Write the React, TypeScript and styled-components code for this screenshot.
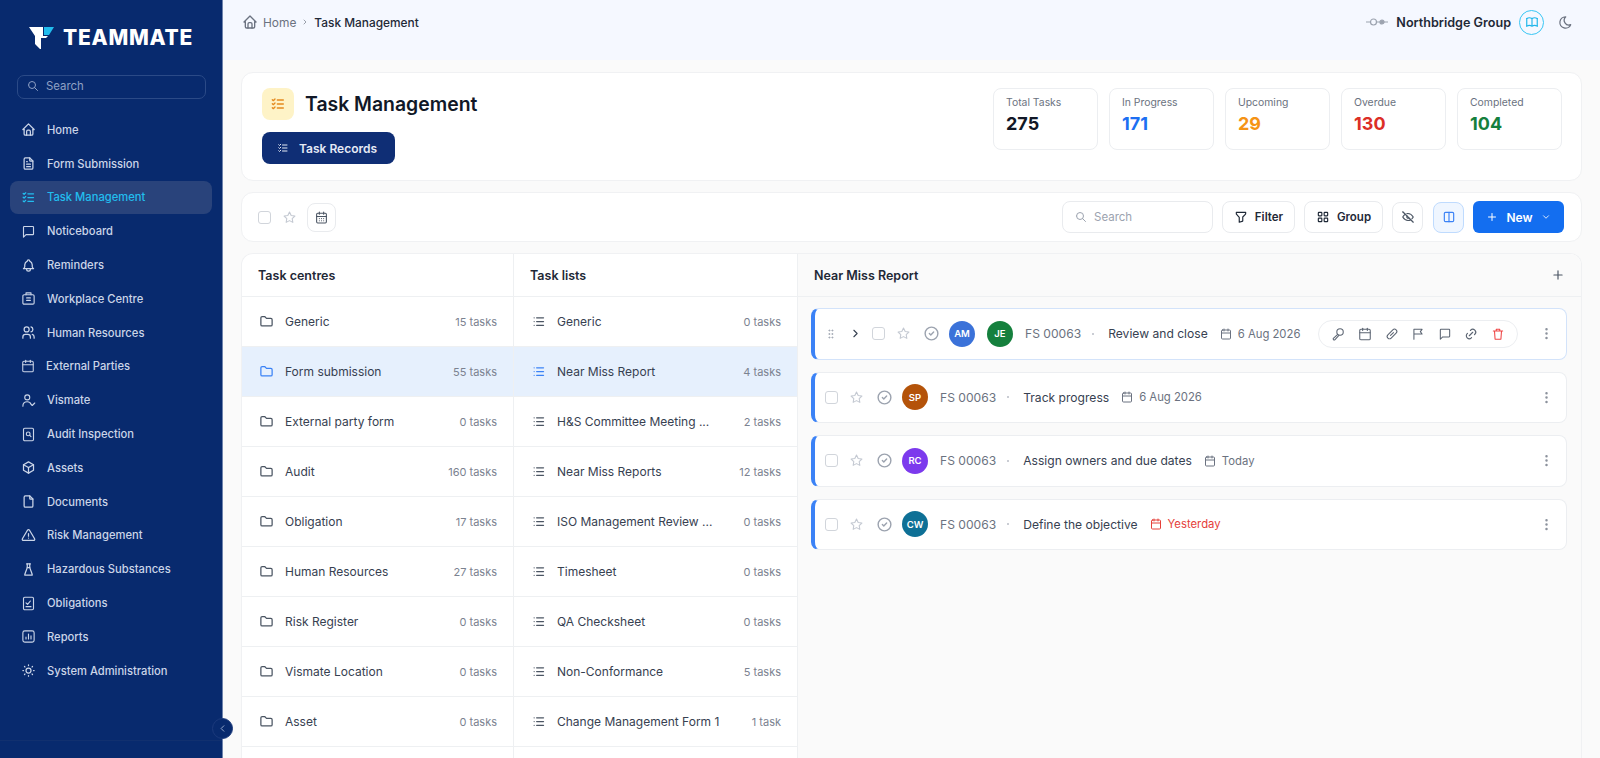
import styled, {createGlobalStyle} from "styled-components";
import {ReactNode} from "react";
import {
    TbHome, TbFileText, TbListCheck, TbBell, TbUsers,
    TbBox, TbFile, TbAlertTriangle, TbFlask, TbSun, TbSearch, TbChevronLeft, TbChevronRight,
    TbChevronDown, TbMoon, TbBook, TbFilter, TbLayoutGrid, TbEyeOff, TbLayoutColumns, TbPlus,
    TbFolder, TbList, TbStar, TbCircleCheck, TbGripVertical, TbDotsVertical, TbLink,
} from "react-icons/tb";
import {Calendar, CalendarDays} from "lucide-react";

const GlobalStyle = createGlobalStyle`
  * {
    box-sizing: border-box;
  }

  html, body {
    margin: 0;
    height: 100%;
    overflow: hidden;
    background: #fafafa;
    font-family: Inter, "Noto Sans", sans-serif;
    color: #1f2937;
  }
`;

const Shell = styled.div`
  display: flex;
  height: 758px;
  overflow: hidden;
`;

const Sidebar = styled.aside`
  position: relative;
  flex: 0 0 223px;
  display: flex;
  flex-direction: column;
  background: #082a6e;
  border-right: 1px solid #6f84ad;
`;

const Brand = styled.div`
  display: flex;
  align-items: center;
  gap: 9px;
  height: 75px;
  padding: 0 0 0 29px;
`;

const BrandName = styled.span`
  color: #fff;
  font-size: 21px;
  font-weight: 800;
  letter-spacing: 0.75px;
`;

const SideSearch = styled.div`
  display: flex;
  align-items: center;
  gap: 7px;
  height: 24px;
  margin: 0 16px 0 17px;
  padding: 0 9px 2px;
  border: 1px solid #2b4a87;
  border-radius: 7px;
  color: #8ea0c4;
  font-size: 11.4px;
  svg {
    flex: none;
  }
`;

const Nav = styled.nav`
  display: flex;
  flex-direction: column;
  margin-top: 14px;
  padding: 0 10px;
`;

const NavItem = styled.a<{ $active?: boolean }>`
  display: flex;
  align-items: center;
  gap: 11px;
  height: 33.8px;
  padding: 0 11px;
  border-radius: 8px;
  font-size: 11.2px;
  font-weight: 500;
  color: ${props => props.$active ? "#22bdee" : "#cbd5e8"};
  background: ${props => props.$active ? "#29437b" : "transparent"};
  svg {
    flex: none;
  }
`;

const SideFoot = styled.div`
  margin-top: auto;
  height: 18px;
  border-top: 1px solid #11306f;
`;

const Collapse = styled.button`
  position: absolute;
  right: -11px;
  bottom: 19px;
  display: flex;
  align-items: center;
  justify-content: center;
  width: 21px;
  height: 21px;
  padding: 0;
  border: 1px solid #1c3a7c;
  border-radius: 50%;
  background: #082a6e;
  color: #9fb0d0;
`;

const Main = styled.main`
  flex: 1;
  min-width: 0;
  display: flex;
  flex-direction: column;
`;

const Topbar = styled.header`
  flex: 0 0 60px;
  display: flex;
  justify-content: space-between;
  padding: 12px 27px 0 19px;
  background: #f5f8ff;
`;

const Crumbs = styled.div`
  display: flex;
  align-items: center;
  gap: 5px;
  height: 20px;
  font-size: 11.9px;
  color: #6b7280;
  b {
    font-weight: 500;
    color: #1f2937;
  }
`;

const Org = styled.div`
  display: flex;
  align-items: center;
  height: 20px;
  font-size: 12.6px;
  font-weight: 600;
  color: #1f2937;
`;

const OrgLink = styled.svg`
  margin-right: 8px;
`;

const OrgBook = styled.span`
  display: flex;
  align-items: center;
  justify-content: center;
  width: 25px;
  height: 25px;
  margin: 0 14px 0 8px;
  border: 1px solid #38c6f4;
  border-radius: 50%;
  color: #1fb6ea;
`;

const Content = styled.div`
  flex: 1;
  min-height: 0;
  display: flex;
  flex-direction: column;
  gap: 11px;
  padding: 12px 18px 0 18px;
`;

const Card = styled.section`
  background: #fff;
  border: 1px solid #f0f1f3;
  border-radius: 12px;
`;

const HeaderCard = styled(Card)`
  flex: 0 0 109px;
  display: flex;
  justify-content: space-between;
  padding: 15px 19px 0 20px;
`;

const TitleRow = styled.div`
  display: flex;
  align-items: center;
  gap: 11px;
`;

const TitleIcon = styled.span`
  display: flex;
  align-items: center;
  justify-content: center;
  width: 32px;
  height: 32px;
  border-radius: 8px;
  background: #fef3c7;
  color: #e58a1f;
`;

const Title = styled.h1`
  margin: 0;
  font-size: 19.4px;
  font-weight: 600;
  color: #111827;
`;

const RecordsButton = styled.button`
  display: flex;
  align-items: center;
  gap: 10px;
  width: 133px;
  height: 32px;
  margin-top: 12px;
  padding: 0 0 0 15px;
  border: 0;
  border-radius: 8px;
  background: #0f2e75;
  color: #e5eaf5;
  font: 600 12px Inter, sans-serif;
`;

const Stats = styled.div`
  display: flex;
  gap: 11px;
`;

const Stat = styled.div`
  width: 105px;
  height: 62px;
  padding: 7px 12px;
  border: 1px solid #eceef1;
  border-radius: 8px;
  span {
    display: block;
    font-size: 10.4px;
    color: #6b7280;
  }
`;

const StatValue = styled.strong<{ $color: string }>`
  display: block;
  margin-top: 4px;
  font-size: 18px;
  font-weight: 700;
  line-height: 22px;
  color: ${props => props.$color};
`;

const Toolbar = styled(Card)`
  flex: 0 0 50px;
  display: flex;
  align-items: center;
  justify-content: space-between;
  padding: 0 17px 0 16px;
`;

const Group = styled.div`
  display: flex;
  align-items: center;
`;

const Check = styled.span`
  flex: none;
  display: block;
  width: 13px;
  height: 13px;
  border: 1px solid #d1d5db;
  border-radius: 3px;
  background: #fff;
`;

const Star = styled(TbStar)<{ $after: number }>`
  flex: none;
  margin-right: ${props => props.$after}px;
  color: #c4c9d2;
`;

const ToolbarStar = styled(Star)`
  margin-left: 12px;
`;

const IconButton = styled.button<{ $active?: boolean, $small?: boolean, $after?: number }>`
  display: flex;
  align-items: center;
  justify-content: center;
  width: ${props => props.$small ? 29 : 31}px;
  height: ${props => props.$small ? 29 : 31}px;
  margin-right: ${props => props.$after ?? 0}px;
  padding: 0;
  border: 1px solid ${props => props.$active ? "#bfdbfe" : "#e9ebee"};
  border-radius: 8px;
  background: ${props => props.$active ? "#eff6ff" : "#fff"};
  color: ${props => props.$active ? "#3b82f6" : "#4b5563"};
`;

const SearchBox = styled.div`
  display: flex;
  align-items: center;
  gap: 7px;
  width: 151px;
  height: 32px;
  margin-right: 9px;
  padding: 0 12px;
  border: 1px solid #e9ebee;
  border-radius: 8px;
  color: #9ca3af;
  font-size: 11.5px;
`;

const ToolButton = styled.button<{ $w: number }>`
  display: flex;
  align-items: center;
  justify-content: center;
  gap: 7px;
  width: ${props => props.$w}px;
  height: 32px;
  margin-right: 9px;
  padding: 0;
  border: 1px solid #e9ebee;
  border-radius: 8px;
  background: #fff;
  color: #1f2937;
  font: 600 11.5px Inter, sans-serif;
`;

const NewButton = styled.button`
  display: flex;
  align-items: center;
  justify-content: center;
  gap: 8px;
  width: 91px;
  height: 32px;
  margin-left: 9px;
  padding: 0;
  border: 0;
  border-radius: 6px;
  background: #136ef0;
  color: #fff;
  font: 600 12px Inter, sans-serif;
`;

const Board = styled.div`
  flex: 1;
  min-height: 0;
  display: flex;
  background: #fff;
  border: 1px solid #f0f1f3;
  border-bottom: 0;
  border-radius: 12px 12px 0 0;
  overflow: hidden;
`;

const Column = styled.div<{ $w: number }>`
  flex: 0 0 ${props => props.$w}px;
  border-right: 1px solid #eef0f2;
`;

const ColumnHead = styled.div`
  display: flex;
  align-items: center;
  height: 43px;
  padding-left: 16px;
  border-bottom: 1px solid #eef0f2;
  font-size: 12.5px;
  font-weight: 600;
  color: #1f2937;
`;

const Row = styled.div<{ $active?: boolean }>`
  display: flex;
  align-items: center;
  gap: 11px;
  height: 50px;
  padding: 0 16px 0 17px;
  border-bottom: 1px solid #eef0f2;
  background: ${props => props.$active ? "#e6f0fd" : "#fff"};
  color: ${props => props.$active ? "#3b82f6" : "#4b5563"};
  svg {
    flex: none;
  }
`;

const RowName = styled.span`
  flex: 1;
  font-size: 12px;
  color: #374151;
  white-space: nowrap;
`;

const RowCount = styled.span`
  font-size: 11px;
  color: #7b8290;
  white-space: nowrap;
`;

const Detail = styled.div`
  flex: 1;
  min-width: 0;
  background: #fafafa;
`;

const DetailHead = styled.div`
  display: flex;
  align-items: center;
  justify-content: space-between;
  height: 43px;
  padding: 0 16px;
  border-bottom: 1px solid #eef0f2;
  font-size: 12.5px;
  font-weight: 600;
  color: #1f2937;
`;

const Tasks = styled.div`
  display: flex;
  flex-direction: column;
  gap: 12px;
  padding: 11px 14px 0 13px;
`;

const TaskCard = styled.div<{ $open?: boolean }>`
  display: flex;
  align-items: center;
  height: 51.5px;
  padding: 0 12px 0 10px;
  background: #fff;
  border: 1px solid ${props => props.$open ? "#d3e3fa" : "#eceef1"};
  border-left: 4px solid #3b82f6;
  border-radius: 8px;
  svg {
    flex: none;
  }
`;

const Grip = styled(TbGripVertical)`
  margin-right: 12px;
  color: #9ca3af;
`;

const Expand = styled(TbChevronRight)`
  margin-right: 10px;
  color: #374151;
`;

const RowCheck = styled(Check)`
  margin-right: 12px;
`;

const Avatar = styled.span<{ $color: string }>`
  flex: none;
  display: flex;
  align-items: center;
  justify-content: center;
  width: 26px;
  height: 26px;
  margin-right: 12px;
  border-radius: 50%;
  background: ${props => props.$color};
  color: #fff;
  font-size: 9.5px;
  font-weight: 600;
`;

const TaskRef = styled.span`
  font-size: 12.1px;
  color: #6b7280;
  white-space: nowrap;
`;

const Dot = styled.span`
  flex: none;
  width: 2px;
  height: 2px;
  margin: 0 14px 0 11px;
  border-radius: 50%;
  background: #b8bdc6;
`;

const TaskName = styled.span`
  margin-right: 12px;
  font-size: 12.1px;
  color: #374151;
  white-space: nowrap;
`;

const DueDate = styled.span<{ $late?: boolean }>`
  display: flex;
  align-items: center;
  gap: 6px;
  font-size: 11.3px;
  white-space: nowrap;
  color: ${props => props.$late ? "#e5403a" : "#6b7280"};
`;

const ActionPill = styled.div`
  display: flex;
  align-items: center;
  gap: 12.6px;
  height: 28px;
  margin-left: 18px;
  padding: 0 12px;
  border: 1px solid #eceef1;
  border-radius: 14px;
  color: #5b6472;
`;

const Kebab = styled(TbDotsVertical)`
  margin-left: auto;
  color: #8b919c;
`;

const CheckIcon = styled(TbCircleCheck)`
  margin-right: 9px;
  color: #9ca3af;
`;

const Logo = () => (
    <svg width="25" height="22" viewBox="0 0 25 22">
        <path d="M0 0H14V9H19L17 11H12V22H11L6 17V9Z" fill="#fff"/>
        <path d="M15 0H25L20 8H15Z" fill="#22bdee"/>
    </svg>
);

const Stroke = ({children, size = 14}: { children: ReactNode, size?: number }) => (
    <svg width={size} height={size} viewBox="0 0 24 24" fill="none" stroke="currentColor" strokeWidth="1.8"
         strokeLinecap="round" strokeLinejoin="round">{children}</svg>
);

const VismateIcon = () => <Stroke size={15}><circle cx="10" cy="7" r="4"/><path d="M3 21c0-5 3-7 7-7 3 0 5 1 6 4l2 2 4-4"/></Stroke>;
const AuditIcon = () => <Stroke size={15}><rect x="4" y="2" width="16" height="20" rx="2"/><circle cx="11.5" cy="11" r="3"/><path d="M14 13.5l2 2"/></Stroke>;
const ObligationIcon = () => <Stroke size={15}><rect x="4" y="2" width="16" height="20" rx="2"/><path d="M8 17h8M8 11l2.5 2.5L15 8"/></Stroke>;
const ReportIcon = () => <Stroke size={15}><rect x="3" y="3" width="18" height="18" rx="3"/><path d="M8 16v-3M12 16V8M16 16v-5"/></Stroke>;
const WorkplaceIcon = () => <Stroke size={15}><rect x="3" y="6" width="18" height="15" rx="2"/><path d="M8 6V3h8v3M9 11h6M9 15h6"/></Stroke>;
const MessageIcon = ({size = 14}: { size?: number }) => <Stroke size={size}><path d="M4 5a1 1 0 0 1 1-1h14a1 1 0 0 1 1 1v11a1 1 0 0 1-1 1H8l-4 4z"/></Stroke>;
const FlagIcon = () => <Stroke><path d="M5 21V4h14l-3 4 3 4H5"/></Stroke>;
const WrenchIcon = () => <Stroke><circle cx="15.5" cy="8.5" r="5.5"/><path d="M11.5 12.5L4 19.5a1.8 1.8 0 0 0 2.5 2.5l7-7.5"/></Stroke>;
const ClipIcon = () => <Stroke><rect x="2" y="8" width="20" height="8" rx="4" transform="rotate(-45 12 12)"/><path d="M9.5 14.5l5-5"/></Stroke>;
const TrashIcon = () => <Stroke><path d="M4 7h16M9 7V4h6v3M6 7l1 14h10l1-14"/></Stroke>;

const navItems: { label: string, icon: ReactNode, active?: boolean }[] = [
    {label: "Home", icon: <TbHome size={15}/>},
    {label: "Form Submission", icon: <TbFileText size={15}/>},
    {label: "Task Management", icon: <TbListCheck size={15}/>, active: true},
    {label: "Noticeboard", icon: <MessageIcon size={15}/>},
    {label: "Reminders", icon: <TbBell size={15}/>},
    {label: "Workplace Centre", icon: <WorkplaceIcon/>},
    {label: "Human Resources", icon: <TbUsers size={15}/>},
    {label: "External Parties", icon: <Calendar size={14} strokeWidth={1.8}/>},
    {label: "Vismate", icon: <VismateIcon/>},
    {label: "Audit Inspection", icon: <AuditIcon/>},
    {label: "Assets", icon: <TbBox size={15}/>},
    {label: "Documents", icon: <TbFile size={15}/>},
    {label: "Risk Management", icon: <TbAlertTriangle size={15}/>},
    {label: "Hazardous Substances", icon: <TbFlask size={15}/>},
    {label: "Obligations", icon: <ObligationIcon/>},
    {label: "Reports", icon: <ReportIcon/>},
    {label: "System Administration", icon: <TbSun size={15}/>},
];

const stats = [
    {label: "Total Tasks", value: "275", color: "#111827"},
    {label: "In Progress", value: "171", color: "#1d6ff2"},
    {label: "Upcoming", value: "29", color: "#f59315"},
    {label: "Overdue", value: "130", color: "#dc2f26"},
    {label: "Completed", value: "104", color: "#15803d"},
];

const centres = [
    {name: "Generic", count: "15 tasks"},
    {name: "Form submission", count: "55 tasks", active: true},
    {name: "External party form", count: "0 tasks"},
    {name: "Audit", count: "160 tasks"},
    {name: "Obligation", count: "17 tasks"},
    {name: "Human Resources", count: "27 tasks"},
    {name: "Risk Register", count: "0 tasks"},
    {name: "Vismate Location", count: "0 tasks"},
    {name: "Asset", count: "0 tasks"},
];

const lists = [
    {name: "Generic", count: "0 tasks"},
    {name: "Near Miss Report", count: "4 tasks", active: true},
    {name: "H&S Committee Meeting ...", count: "2 tasks"},
    {name: "Near Miss Reports", count: "12 tasks"},
    {name: "ISO Management Review ...", count: "0 tasks"},
    {name: "Timesheet", count: "0 tasks"},
    {name: "QA Checksheet", count: "0 tasks"},
    {name: "Non-Conformance", count: "5 tasks"},
    {name: "Change Management Form 1", count: "1 task"},
];

const tasks = [
    {initials: "SP", color: "#b45309", name: "Track progress", due: "6 Aug 2026"},
    {initials: "RC", color: "#7c3aed", name: "Assign owners and due dates", due: "Today"},
    {initials: "CW", color: "#0e7096", name: "Define the objective", due: "Yesterday", late: true},
];

function App() {
    return (
        <Shell>
            <GlobalStyle/>
            <Sidebar>
                <Brand>
                    <Logo/>
                    <BrandName>TEAMMATE</BrandName>
                </Brand>
                <SideSearch>
                    <TbSearch size={12}/>
                    Search
                </SideSearch>
                <Nav>
                    {navItems.map((item) => (
                        <NavItem key={item.label} $active={item.active}>
                            {item.icon}
                            {item.label}
                        </NavItem>
                    ))}
                </Nav>
                <SideFoot/>
                <Collapse><TbChevronLeft size={11}/></Collapse>
            </Sidebar>
            <Main>
                <Topbar>
                    <Crumbs>
                        <TbHome size={16}/>
                        Home
                        <TbChevronRight size={8}/>
                        <b>Task Management</b>
                    </Crumbs>
                    <Org>
                        <OrgLink width="22" height="10" viewBox="0 0 22 10" fill="none" stroke="#9ca3af" strokeWidth="1.2">
                            <path d="M0 5h4M11 5h3M18 5h4"/>
                            <circle cx="7.5" cy="5" r="3"/>
                            <circle cx="16" cy="5" r="2" fill="#9ca3af"/>
                        </OrgLink>
                        Northbridge Group
                        <OrgBook><TbBook size={14}/></OrgBook>
                        <TbMoon size={15} color="#6b7280"/>
                    </Org>
                </Topbar>
                <Content>
                    <HeaderCard>
                        <div>
                            <TitleRow>
                                <TitleIcon><TbListCheck size={16}/></TitleIcon>
                                <Title>Task Management</Title>
                            </TitleRow>
                            <RecordsButton>
                                <TbListCheck size={12}/>
                                Task Records
                            </RecordsButton>
                        </div>
                        <Stats>
                            {stats.map((stat) => (
                                <Stat key={stat.label}>
                                    <span>{stat.label}</span>
                                    <StatValue $color={stat.color}>{stat.value}</StatValue>
                                </Stat>
                            ))}
                        </Stats>
                    </HeaderCard>
                    <Toolbar>
                        <Group>
                            <Check/>
                            <ToolbarStar size={13} $after={11}/>
                            <IconButton $small><CalendarDays size={13}/></IconButton>
                        </Group>
                        <Group>
                            <SearchBox><TbSearch size={12}/>Search</SearchBox>
                            <ToolButton $w={73}><TbFilter size={14}/>Filter</ToolButton>
                            <ToolButton $w={79}><TbLayoutGrid size={14}/>Group</ToolButton>
                            <IconButton $after={10}><TbEyeOff size={14}/></IconButton>
                            <IconButton $active><TbLayoutColumns size={14}/></IconButton>
                            <NewButton><TbPlus size={12}/>New<TbChevronDown size={10}/></NewButton>
                        </Group>
                    </Toolbar>
                    <Board>
                        <Column $w={272}>
                            <ColumnHead>Task centres</ColumnHead>
                            {centres.map((row) => (
                                <Row key={row.name} $active={row.active}>
                                    <TbFolder size={15}/>
                                    <RowName>{row.name}</RowName>
                                    <RowCount>{row.count}</RowCount>
                                </Row>
                            ))}
                        </Column>
                        <Column $w={284}>
                            <ColumnHead>Task lists</ColumnHead>
                            {lists.map((row) => (
                                <Row key={row.name} $active={row.active}>
                                    <TbList size={15}/>
                                    <RowName>{row.name}</RowName>
                                    <RowCount>{row.count}</RowCount>
                                </Row>
                            ))}
                        </Column>
                        <Detail>
                            <DetailHead>
                                Near Miss Report
                                <TbPlus size={14} color="#4b5563"/>
                            </DetailHead>
                            <Tasks>
                                <TaskCard $open>
                                    <Grip size={12}/>
                                    <Expand size={13}/>
                                    <RowCheck/>
                                    <Star size={13} $after={13}/>
                                    <CheckIcon size={17}/>
                                    <Avatar $color="#3b72d9">AM</Avatar>
                                    <Avatar $color="#15803d">JE</Avatar>
                                    <TaskRef>FS 00063</TaskRef>
                                    <Dot/>
                                    <TaskName>Review and close</TaskName>
                                    <DueDate><Calendar size={12}/>6 Aug 2026</DueDate>
                                    <ActionPill>
                                        <WrenchIcon/>
                                        <Calendar size={14} strokeWidth={1.8}/>
                                        <ClipIcon/>
                                        <FlagIcon/>
                                        <MessageIcon/>
                                        <TbLink size={14}/>
                                        <span style={{color: "#ef4444", display: "flex"}}><TrashIcon/></span>
                                    </ActionPill>
                                    <Kebab size={15}/>
                                </TaskCard>
                                {tasks.map((task) => (
                                    <TaskCard key={task.initials}>
                                        <RowCheck/>
                                        <Star size={13} $after={13}/>
                                        <CheckIcon size={17}/>
                                        <Avatar $color={task.color}>{task.initials}</Avatar>
                                        <TaskRef>FS 00063</TaskRef>
                                        <Dot/>
                                        <TaskName>{task.name}</TaskName>
                                        <DueDate $late={task.late}><Calendar size={12}/>{task.due}</DueDate>
                                        <Kebab size={15}/>
                                    </TaskCard>
                                ))}
                            </Tasks>
                        </Detail>
                    </Board>
                </Content>
            </Main>
        </Shell>
    );
}

export default App;
